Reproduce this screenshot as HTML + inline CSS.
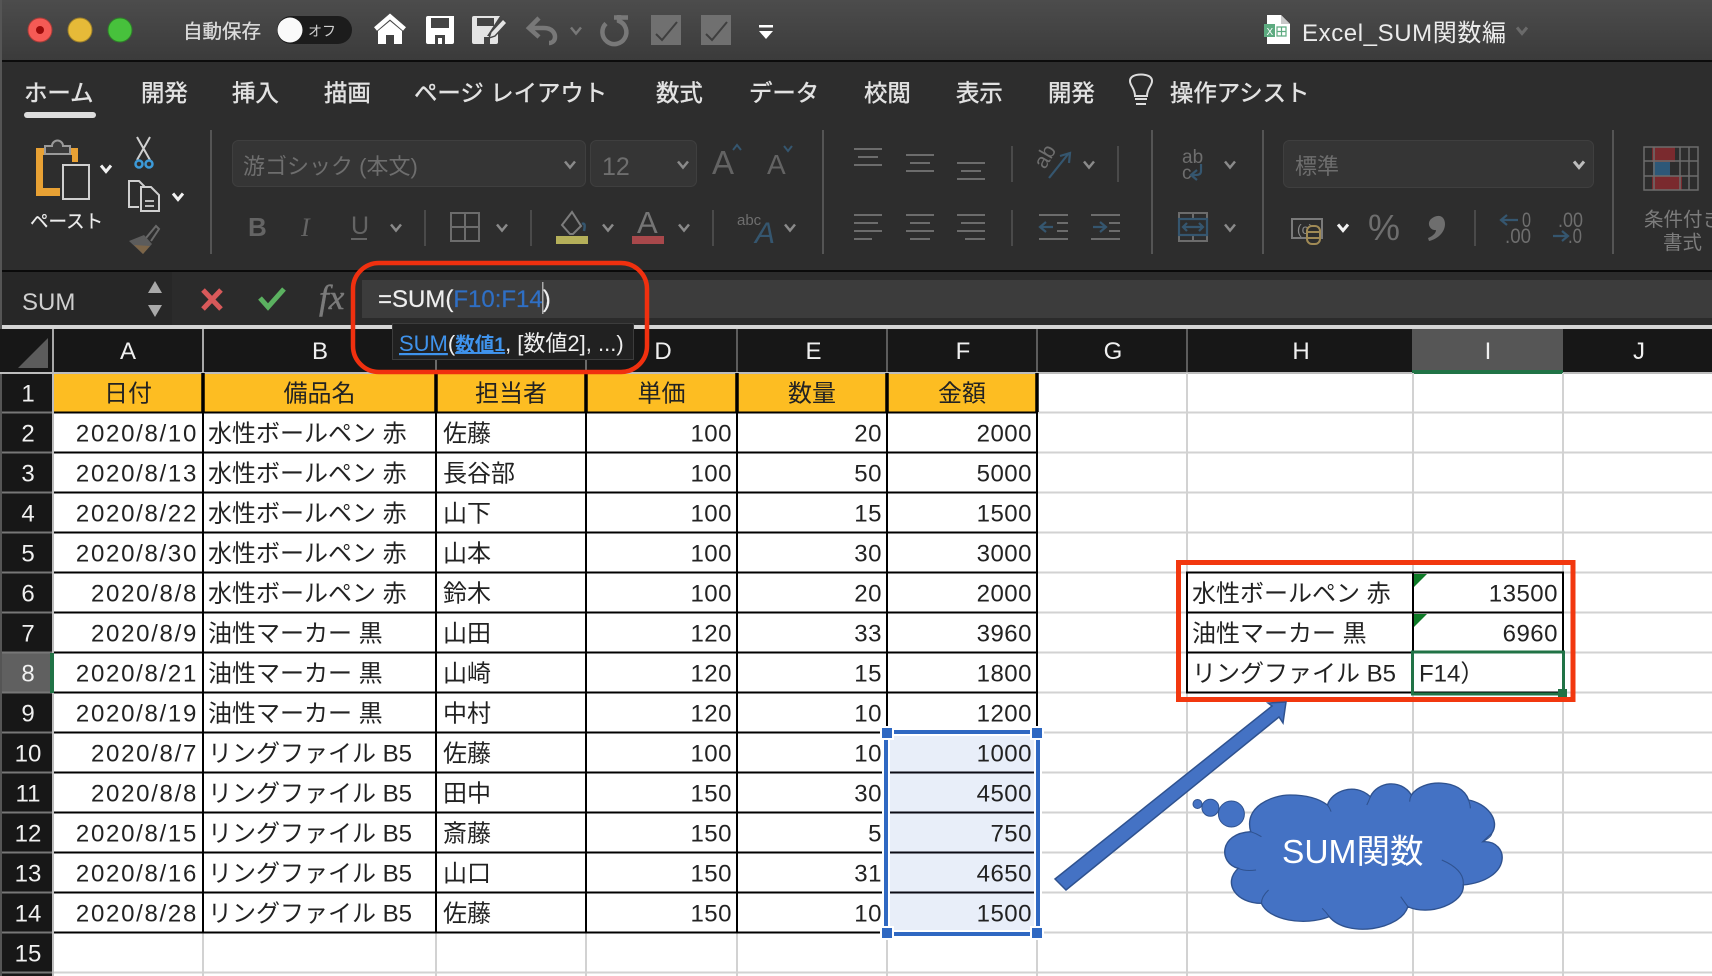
<!DOCTYPE html>
<html lang="ja"><head><meta charset="utf-8"><title>Excel_SUM関数編</title>
<style>
html,body{margin:0;padding:0;background:#fff;width:1712px;height:976px;overflow:hidden}
svg{display:block}
text{font-family:"Liberation Sans","Noto Sans CJK JP",sans-serif;font-size:24px}
.t{fill:#222}
.n{fill:#222;text-anchor:end;letter-spacing:.5px}
.d{fill:#222;text-anchor:end;letter-spacing:1.7px}
.h{fill:#222;text-anchor:middle}
.w{fill:#f0f0f0;text-anchor:middle}
.tab{fill:#e2e2e2;font-size:23.4px;stroke:#e2e2e2;stroke-width:.45px}
.g{fill:#6e6e6e}
.ln{stroke:#6c6c6c;stroke-width:2;fill:none}
.ib{stroke:#35566f;stroke-width:2.2;fill:none}
.sep{stroke:#545454;stroke-width:2}
.sm{stroke:#4a4a4a;stroke-width:2}
.cw{stroke:#f2f2f2;fill:none;stroke-width:3}
.cg{stroke:#8a8a8a;fill:none;stroke-width:2.5}
</style></head><body>
<svg width="1712" height="976" viewBox="0 0 1712 976" xmlns="http://www.w3.org/2000/svg">
<defs>
<linearGradient id="tb" x1="0" y1="0" x2="0" y2="1"><stop offset="0" stop-color="#4c4c4c"/><stop offset="1" stop-color="#3b3b3b"/></linearGradient>
<path id="c" d="M-5 -3.5L0 2.5L5 -3.5"/>
</defs>

<!-- title bar -->
<rect width="1712" height="60" fill="url(#tb)"/>
<rect y="60" width="1712" height="2" fill="#0c0c0c"/>
<rect y="62" width="1712" height="208" fill="#2d2d2d"/>
<rect y="270" width="1712" height="2" fill="#0a0a0a"/>
<rect y="0" width="2" height="330" fill="#555"/>
<circle cx="40" cy="30" r="12" fill="#f55a55" stroke="#a63c38"/><circle cx="40" cy="30" r="4" fill="#9c0a0a"/>
<circle cx="80" cy="30" r="12" fill="#e6ba38" stroke="#9c7f2a"/>
<circle cx="120" cy="30" r="12" fill="#47c13c" stroke="#2e7f29"/>
<text x="183" y="38" style="font-size:19.5px;fill:#dcdcdc;stroke:#dcdcdc;stroke-width:.3px">自動保存</text>
<rect x="277" y="16" width="75" height="28" rx="14" fill="#1c1c1c"/>
<circle cx="290" cy="30" r="12.5" fill="#fafafa"/>
<text x="308" y="36" style="font-size:14px;fill:#cfcfcf">オフ</text>
<!-- home -->
<path d="M375.5 29L390 16.5L404.5 29" fill="none" stroke="#fff" stroke-width="4.5"/>
<path d="M378 31L390 21L402 31V44H394V35H386V44H378Z" fill="#fff"/>
<!-- save -->
<path d="M428 16H454V42Q454 44 452 44H428Q426 44 426 42V18Q426 16 428 16Z" fill="#fff"/>
<rect x="431" y="18" width="18" height="10" fill="#444"/><rect x="435" y="35" width="10" height="9" fill="#444"/><rect x="438" y="38" width="4" height="6" fill="#fff"/>
<!-- edit -->
<path d="M474 16H500L487 36L484 44H474Q472 44 472 42V18Q472 16 474 16Z" fill="#e4e4e4"/>
<rect x="477" y="18" width="17" height="8" fill="#444"/><path d="M481 44V36H490L498 32V42Q498 44 496 44Z" fill="#e4e4e4"/><rect x="484" y="37" width="6" height="7" fill="#444"/>
<path d="M491 32L503 19L507 23L495 36L489 38Z" fill="#e4e4e4" stroke="#444" stroke-width="1.4"/>
<!-- undo -->
<path d="M530 28H544C552 28 555 33 555 37C555 41 552 43 549 43M539 18L529 28L539 37" fill="none" stroke="#787878" stroke-width="4.5"/>
<use href="#c" x="576" y="31" fill="none" stroke="#787878" stroke-width="2.5"/>
<path d="M606 23.5A12 12 0 1 0 619 21V15M614 17.500H628" fill="none" stroke="#787878" stroke-width="4.5"/>
<rect x="651" y="15" width="30" height="30" fill="#707070"/><path d="M656 34L662 40L677 22" fill="none" stroke="#3f3f3f" stroke-width="2"/>
<rect x="701" y="15" width="30" height="30" fill="#707070"/><path d="M706 34L712 40L727 22" fill="none" stroke="#3f3f3f" stroke-width="2"/>
<rect x="759" y="25" width="14" height="2.5" fill="#fff"/><path d="M759 31H773L766 39Z" fill="#fff"/>
<!-- doc title -->
<path d="M1267 15H1281L1290 24V44H1267Z" fill="#fff"/><path d="M1281 15L1290 24H1281Z" fill="#c9c9c9"/>
<rect x="1264" y="24" width="11" height="13" fill="#5dab80"/>
<text x="1266.5" y="35" style="font-size:10px;fill:#fff">X</text>
<path d="M1277 27h9v9h-9zM1277 31.5h9M1281.500 27v9" fill="none" stroke="#5dab80" stroke-width="1.2"/>
<text x="1302" y="41" style="fill:#ebebeb;letter-spacing:.6px">Excel_SUM関数編</text>
<use href="#c" x="1522" y="31" fill="none" stroke="#6a6a6a" stroke-width="3"/>

<!-- tabs -->
<text class="tab" x="24" y="101">ホーム</text>
<rect x="24" y="112" width="72" height="6" rx="3" fill="#ddd"/>
<text class="tab" x="141" y="101">開発</text>
<text class="tab" x="232" y="101">挿入</text>
<text class="tab" x="324" y="101">描画</text>
<text class="tab" x="414" y="101">ページ レイアウト</text>
<text class="tab" x="656" y="101">数式</text>
<text class="tab" x="749" y="101">データ</text>
<text class="tab" x="864" y="101">校閲</text>
<text class="tab" x="956" y="101">表示</text>
<text class="tab" x="1048" y="101">開発</text>
<text class="tab" x="1170" y="101">操作アシスト</text>
<path d="M1135 96C1135 88 1130 86 1130 81C1130 77 1134 74.500 1141 74.500C1148 74.500 1152 77 1152 81C1152 86 1147 88 1147 96Z" fill="none" stroke="#ddd" stroke-width="2"/>
<path d="M1135 99H1147M1136 104H1146" stroke="#ddd" stroke-width="2"/>

<!-- clipboard group -->
<path d="M36 148H78V162H72V155H43V188H60V196H36Z" fill="#e8a134"/>
<path d="M45 153V146H52A5 5 0 0 1 63 146H70V154H45Z" fill="#3a3a3a" stroke="#9a9a9a" stroke-width="2"/>
<rect x="63" y="165" width="26" height="34" fill="#2d2d2d" stroke="#cfcfcf" stroke-width="2"/>
<use href="#c" x="106" y="169" class="cw"/>
<text x="30" y="228" style="font-size:18.500px;fill:#ececec;stroke:#ececec;stroke-width:.2px">ペースト</text>
<path d="M137 137L150 160M150 137L137 160" stroke="#d0d0d0" stroke-width="2" fill="none"/>
<circle cx="139" cy="164" r="3.500" fill="none" stroke="#3c9ad8" stroke-width="2.500"/><circle cx="149" cy="164" r="3.500" fill="none" stroke="#3c9ad8" stroke-width="2.500"/>
<path d="M139 207H129V181H139L144 186V190" fill="none" stroke="#cfcfcf" stroke-width="2"/>
<path d="M141 187H151L159 195V211H141Z" fill="#2d2d2d" stroke="#cfcfcf" stroke-width="2"/>
<path d="M145 201H154M145 206H154" stroke="#bbb" stroke-width="2"/>
<use href="#c" x="178" y="197" class="cw"/>
<path d="M146 238L156 226L159 229L151 241" fill="none" stroke="#6a6a6a" stroke-width="2"/>
<path d="M129 241L144 235L152 244L143 254Z" fill="#5c5c5c"/><path d="M134 245L150 246L143 254Z" fill="#7c6548"/>
<line class="sep" x1="211" y1="130" x2="211" y2="254"/>

<!-- font -->
<rect x="232.500" y="140.500" width="353" height="46" rx="6" fill="#353535" stroke="#3f3f3f"/>
<text x="243" y="174" class="g" style="font-size:22px">游ゴシック (本文)</text>
<use href="#c" x="570" y="165" class="cg"/>
<rect x="590.500" y="140.500" width="106" height="46" rx="6" fill="#353535" stroke="#3f3f3f"/>
<text x="602" y="175" class="g" style="font-size:25px">12</text>
<use href="#c" x="683" y="165" class="cg"/>
<text x="712" y="174" style="font-size:33px;fill:#636363">A</text><path d="M733 150L737 145L741 150" fill="none" stroke="#35566f" stroke-width="2"/>
<text x="767" y="174" style="font-size:28px;fill:#636363">A</text><path d="M784 146L788 151L792 146" fill="none" stroke="#35566f" stroke-width="2"/>
<text x="248" y="236" style="font-size:26px;font-weight:bold;fill:#646464">B</text>
<text x="301" y="236" style="font-size:26px;font-style:italic;font-family:'Liberation Serif',serif;fill:#646464">I</text>
<text x="351" y="234" style="font-size:25px;fill:#646464">U</text><path d="M351 239H367" stroke="#646464" stroke-width="2"/>
<use href="#c" x="396" y="228" class="cg"/>
<line class="sm" x1="425" y1="210" x2="425" y2="246"/>
<path d="M451 213H479V241H451ZM465 213V241M451 227H479" fill="none" stroke="#6c6c6c" stroke-width="2"/>
<use href="#c" x="502" y="228" class="cg"/>
<line class="sm" x1="531" y1="210" x2="531" y2="246"/>
<path d="M562 225L572 212L581 226L573 234H570Z" fill="none" stroke="#7c7c7c" stroke-width="2"/><path d="M582 224Q586 222 584 231" stroke="#35566f" stroke-width="2.500" fill="none"/>
<rect x="556" y="236" width="32" height="8" fill="#b5b05a"/>
<use href="#c" x="608" y="228" class="cg"/>
<text x="637" y="233" style="font-size:31px;fill:#757575">A</text>
<rect x="632" y="236" width="32" height="8" fill="#a8484b"/>
<use href="#c" x="684" y="228" class="cg"/>
<line class="sm" x1="713" y1="210" x2="713" y2="246"/>
<text x="737" y="225" class="g" style="font-size:15px">abc</text>
<text x="755" y="243" style="font-size:30px;font-style:italic;fill:#35566f">A</text>
<use href="#c" x="790" y="228" class="cg"/>
<line class="sep" x1="823" y1="130" x2="823" y2="254"/>

<!-- alignment -->
<path class="ln" d="M854 149H882M858 157H878M854 165H882"/>
<path class="ln" d="M906 155H934M910 163H930M906 171H934"/>
<path class="ln" d="M957 163H985M961 171H981M957 179H985"/>
<path class="ln" d="M854 215H882M854 223H878M854 231H882M854 239H872"/>
<path class="ln" d="M906 215H934M910 223H930M906 231H934M910 239H930"/>
<path class="ln" d="M957 215H985M961 223H985M957 231H985M965 239H985"/>
<line class="sm" x1="1012" y1="146" x2="1012" y2="182"/>
<text transform="translate(1045,170) rotate(-60)" class="g" style="font-size:21px">ab</text>
<path class="ib" d="M1049 178L1069 153M1060 156L1070 153L1069 163"/>
<use href="#c" x="1089" y="165" class="cg"/>
<line class="sm" x1="1118" y1="146" x2="1118" y2="182"/>
<line class="sm" x1="1012" y1="210" x2="1012" y2="246"/>
<path class="ln" d="M1039 215H1068M1057 223H1068M1057 231H1068M1039 239H1068M1091 215H1120M1109 223H1120M1109 231H1120M1091 239H1120"/>
<path class="ib" d="M1053 227H1041M1046 222L1040 227L1046 232M1093 227H1105M1100 222L1106 227L1100 232"/>
<line class="sep" x1="1152" y1="130" x2="1152" y2="254"/>
<text x="1182" y="163" class="g" style="font-size:19px">ab</text>
<text x="1182" y="179" class="g" style="font-size:19px">c</text>
<path class="ib" d="M1201 164V171C1201 174 1199 175 1196 175H1192M1197 170L1191 175L1197 180"/>
<use href="#c" x="1230" y="165" class="cg"/>
<path class="ln" d="M1179 213H1207V241H1179ZM1193 213V220M1193 234V241"/>
<rect x="1179" y="219" width="28" height="16" class="ib"/>
<path class="ib" d="M1183 227H1203M1187 223L1183 227L1187 231M1199 223L1203 227L1199 231"/>
<use href="#c" x="1230" y="228" class="cg"/>
<line class="sep" x1="1263" y1="130" x2="1263" y2="254"/>

<!-- number -->
<rect x="1283.500" y="140.500" width="310" height="47" rx="6" fill="#353535" stroke="#3f3f3f"/>
<text x="1295" y="174" class="g" style="font-size:22px">標準</text>
<use href="#c" x="1579" y="165" class="cw" style="stroke:#bdbdbd"/>
<rect x="1292" y="219" width="30" height="19" fill="none" stroke="#7a7a7a" stroke-width="2"/>
<text x="1297" y="234" style="font-size:14px;fill:#8a8a8a">(c)</text>
<rect x="1307" y="226" width="13" height="18" rx="5" fill="#2d2d2d" stroke="#a08a55" stroke-width="2"/><path d="M1307 232H1320M1307 238H1320" stroke="#a08a55" stroke-width="2"/>
<use href="#c" x="1343" y="228" class="cw"/>
<text x="1368" y="240" class="g" style="font-size:36px">%</text>
<path d="M1431 219C1438 213 1445 216 1445 224C1445 232 1438 239 1429 241L1428 238C1433 236 1436 233 1436 230C1431 231 1426 224 1431 219Z" fill="#6e6e6e"/>
<line class="sm" x1="1475" y1="210" x2="1475" y2="246"/>
<text x="1522" y="227" class="g" style="font-size:21px" textLength="9" lengthAdjust="spacingAndGlyphs">0</text>
<text x="1505" y="243" class="g" style="font-size:21px" textLength="26" lengthAdjust="spacingAndGlyphs">.00</text>
<path class="ib" d="M1518 220H1502M1507 215L1501 220L1507 225"/>
<text x="1558" y="227" class="g" style="font-size:21px" textLength="25" lengthAdjust="spacingAndGlyphs">.00</text>
<text x="1568" y="243" class="g" style="font-size:21px" textLength="14" lengthAdjust="spacingAndGlyphs">.0</text>
<path class="ib" d="M1553 236H1567M1562 231L1568 236L1562 241"/>
<line class="sep" x1="1613" y1="130" x2="1613" y2="254"/>
<rect x="1652" y="147" width="23" height="15" fill="#7a2a2e"/><rect x="1653" y="162" width="17" height="14" fill="#2d5878"/><rect x="1652" y="176" width="30" height="14" fill="#7a2a2e"/>
<path d="M1644 147H1698V190H1644ZM1644 161H1698M1644 176H1698M1654 147V190M1680 147V190M1689 147V190" fill="none" stroke="#6c6c6c" stroke-width="1.500"/>
<text x="1644" y="226" class="g" style="font-size:19.500px;fill:#7c7c7c">条件付き</text>
<text x="1663" y="249" class="g" style="font-size:19.500px;fill:#7c7c7c">書式</text>

<!-- formula bar -->
<rect y="272" width="1712" height="53" fill="#2b2b2b"/>
<rect x="0" y="272" width="172" height="53" fill="#272727"/>
<rect x="362" y="280" width="1350" height="38" fill="#3c3c3c"/>
<rect y="325" width="1712" height="4" fill="#d5d5d5"/>
<rect y="0" width="2" height="330" fill="#555"/>
<text x="22" y="310" style="fill:#cfcfcf">SUM</text>
<path d="M148 293L155 281L162 293Z" fill="#a9a9a9"/><path d="M148 305L155 317L162 305Z" fill="#a9a9a9"/>
<path d="M203 290L221 309M221 290L203 309" stroke="#d8595a" stroke-width="5"/>
<path d="M260 298L268 307L284 289" fill="none" stroke="#5bb160" stroke-width="5"/>
<text x="319" y="309" style="font-family:'Liberation Serif',serif;font-style:italic;font-size:35px;fill:#7a7a7a;stroke:#7a7a7a;stroke-width:.5px">fx</text>
<text x="378" y="307" style="fill:#eee;stroke:#eee;stroke-width:.2px">=SUM(<tspan fill="#2f6fc4" stroke="#2f6fc4">F10:F14</tspan>)</text>
<rect x="542" y="282" width="1.500" height="32" fill="#aaa"/>

<!-- column headers -->
<rect y="329" width="1712" height="43" fill="#171717"/>
<rect x="1412" y="329" width="151" height="41" fill="#565656"/>
<path d="M18 368L48 338V368Z" fill="#5c5c5c"/>
<path d="M53 329V372M203 329V372" stroke="#a8a8a8" stroke-width="2"/>
<path d="M436 329V372M586 329V372M737 329V372M887 329V372M1037 329V372M1187 329V372" stroke="#5c5c5c" stroke-width="2"/>
<text class="w" x="128" y="359">A</text><text class="w" x="320" y="359">B</text><text class="w" x="512" y="359">C</text><text class="w" x="663" y="359">D</text><text class="w" x="813.500" y="359">E</text><text class="w" x="963" y="359">F</text><text class="w" x="1113" y="359">G</text><text class="w" x="1301" y="359">H</text><text class="w" x="1488" y="359">I</text><text class="w" x="1639" y="359">J</text>

<!-- row headers -->
<rect y="373" width="53" height="603" fill="#171717"/>
<rect x="0" y="373" width="2" height="603" fill="#555"/>
<rect x="2" y="653" width="48" height="40" fill="#606060"/>
<g stroke="#777" stroke-width="2"><path d="M2 412.500H53M2 452.500H53M2 492.500H53M2 532.500H53M2 572.500H53M2 612.500H53M2 652.500H53M2 692.500H53M2 732.500H53M2 772.500H53M2 812.500H53M2 852.500H53M2 892.500H53M2 932.500H53M2 972.500H53"/></g>
<rect x="52" y="373" width="2" height="603" fill="#bdbdbd"/>
<rect x="50" y="653" width="4" height="40" fill="#217346"/>
<text class="w" x="28" y="401.500">1</text><text class="w" x="28" y="441.500">2</text><text class="w" x="28" y="481.500">3</text><text class="w" x="28" y="521.500">4</text><text class="w" x="28" y="561.500">5</text><text class="w" x="28" y="601.500">6</text><text class="w" x="28" y="641.500">7</text><text class="w" x="28" y="681.500">8</text><text class="w" x="28" y="721.500">9</text><text class="w" x="28" y="761.500">10</text><text class="w" x="28" y="801.500">11</text><text class="w" x="28" y="841.500">12</text><text class="w" x="28" y="881.500">13</text><text class="w" x="28" y="921.500">14</text><text class="w" x="28" y="961.500">15</text>

<!-- sheet -->
<rect x="54" y="373" width="1658" height="603" fill="#fff"/>
<rect y="372" width="1712" height="2" fill="#bdbdbd"/>
<rect x="1412" y="370" width="151" height="4" fill="#217346"/>
<!-- gridlines -->
<path stroke="#d2d2d2" stroke-width="2" d="M1038 412.500H1712M1038 452.500H1712M1038 492.500H1712M1038 532.500H1712M1038 572.500H1712M1038 612.500H1712M1038 652.500H1712M1038 692.500H1712M1038 732.500H1712M1038 772.500H1712M1038 812.500H1712M1038 852.500H1712M1038 892.500H1712M1038 932.500H1712M54 972.500H1712M1187 373V976M1413 373V976M1563 373V976M203 933V976M436 933V976M586 933V976M737 933V976M887 933V976M1037 933V976"/>
<!-- header row -->
<rect x="54" y="374" width="983" height="38" fill="#fdbd22"/>
<path stroke="#000" stroke-width="3.500" d="M203 373V412M436 373V412M586 373V412M737 373V412M887 373V412M1037 373V412"/>
<!-- borders -->
<path stroke="#000" stroke-width="2" d="M54 412.500H1038M54 452.500H1038M54 492.500H1038M54 532.500H1038M54 572.500H1038M54 612.500H1038M54 652.500H1038M54 692.500H1038M54 732.500H880M54 772.500H884M54 812.500H884M54 852.500H884M54 892.500H884M54 932.500H880M203 412V933M436 412V933M586 412V933M737 412V933M887 412V726M1037 412V726"/>
<!-- selection -->
<rect x="882" y="728" width="160" height="210" fill="#fff"/>
<rect x="890" y="736" width="144" height="194" fill="#e8eef9"/>
<path stroke="#0a0a14" stroke-width="2" d="M890 772.500H1034M890 812.500H1034M890 852.500H1034M890 892.500H1034"/>
<rect x="886" y="732" width="152" height="202" fill="none" stroke="#2f68c2" stroke-width="4"/>
<g fill="#2f68c2" stroke="#fff" stroke-width="2"><rect x="881" y="727" width="12" height="12"/><rect x="1031" y="727" width="12" height="12"/><rect x="881" y="927" width="12" height="12"/><rect x="1031" y="927" width="12" height="12"/></g>

<!-- headers text -->
<text class="h" x="128" y="401.500">日付</text><text class="h" x="319.500" y="401.500">備品名</text><text class="h" x="511" y="401.500">担当者</text><text class="h" x="661.500" y="401.500">単価</text><text class="h" x="812" y="401.500">数量</text><text class="h" x="962" y="401.500">金額</text>

<!-- data -->
<text class="d" x="198" y="441.500">2020/8/10</text><text class="t" x="208" y="441.500">水性ボールペン 赤</text><text class="t" x="443" y="441.500">佐藤</text><text class="n" x="732" y="441.500">100</text><text class="n" x="882" y="441.500">20</text><text class="n" x="1032" y="441.500">2000</text>
<text class="d" x="198" y="481.500">2020/8/13</text><text class="t" x="208" y="481.500">水性ボールペン 赤</text><text class="t" x="443" y="481.500">長谷部</text><text class="n" x="732" y="481.500">100</text><text class="n" x="882" y="481.500">50</text><text class="n" x="1032" y="481.500">5000</text>
<text class="d" x="198" y="521.500">2020/8/22</text><text class="t" x="208" y="521.500">水性ボールペン 赤</text><text class="t" x="443" y="521.500">山下</text><text class="n" x="732" y="521.500">100</text><text class="n" x="882" y="521.500">15</text><text class="n" x="1032" y="521.500">1500</text>
<text class="d" x="198" y="561.500">2020/8/30</text><text class="t" x="208" y="561.500">水性ボールペン 赤</text><text class="t" x="443" y="561.500">山本</text><text class="n" x="732" y="561.500">100</text><text class="n" x="882" y="561.500">30</text><text class="n" x="1032" y="561.500">3000</text>
<text class="d" x="198" y="601.500">2020/8/8</text><text class="t" x="208" y="601.500">水性ボールペン 赤</text><text class="t" x="443" y="601.500">鈴木</text><text class="n" x="732" y="601.500">100</text><text class="n" x="882" y="601.500">20</text><text class="n" x="1032" y="601.500">2000</text>
<text class="d" x="198" y="641.500">2020/8/9</text><text class="t" x="208" y="641.500">油性マーカー 黒</text><text class="t" x="443" y="641.500">山田</text><text class="n" x="732" y="641.500">120</text><text class="n" x="882" y="641.500">33</text><text class="n" x="1032" y="641.500">3960</text>
<text class="d" x="198" y="681.500">2020/8/21</text><text class="t" x="208" y="681.500">油性マーカー 黒</text><text class="t" x="443" y="681.500">山崎</text><text class="n" x="732" y="681.500">120</text><text class="n" x="882" y="681.500">15</text><text class="n" x="1032" y="681.500">1800</text>
<text class="d" x="198" y="721.500">2020/8/19</text><text class="t" x="208" y="721.500">油性マーカー 黒</text><text class="t" x="443" y="721.500">中村</text><text class="n" x="732" y="721.500">120</text><text class="n" x="882" y="721.500">10</text><text class="n" x="1032" y="721.500">1200</text>
<text class="d" x="198" y="761.500">2020/8/7</text><text class="t" x="208" y="761.500">リングファイル B5</text><text class="t" x="443" y="761.500">佐藤</text><text class="n" x="732" y="761.500">100</text><text class="n" x="882" y="761.500">10</text><text class="n" x="1032" y="761.500">1000</text>
<text class="d" x="198" y="801.500">2020/8/8</text><text class="t" x="208" y="801.500">リングファイル B5</text><text class="t" x="443" y="801.500">田中</text><text class="n" x="732" y="801.500">150</text><text class="n" x="882" y="801.500">30</text><text class="n" x="1032" y="801.500">4500</text>
<text class="d" x="198" y="841.500">2020/8/15</text><text class="t" x="208" y="841.500">リングファイル B5</text><text class="t" x="443" y="841.500">斎藤</text><text class="n" x="732" y="841.500">150</text><text class="n" x="882" y="841.500">5</text><text class="n" x="1032" y="841.500">750</text>
<text class="d" x="198" y="881.500">2020/8/16</text><text class="t" x="208" y="881.500">リングファイル B5</text><text class="t" x="443" y="881.500">山口</text><text class="n" x="732" y="881.500">150</text><text class="n" x="882" y="881.500">31</text><text class="n" x="1032" y="881.500">4650</text>
<text class="d" x="198" y="921.500">2020/8/28</text><text class="t" x="208" y="921.500">リングファイル B5</text><text class="t" x="443" y="921.500">佐藤</text><text class="n" x="732" y="921.500">150</text><text class="n" x="882" y="921.500">10</text><text class="n" x="1032" y="921.500">1500</text>

<!-- summary table -->
<rect x="1187" y="573" width="376" height="120" fill="#fff"/>
<path stroke="#000" stroke-width="2" fill="none" d="M1187 572.500H1563V692.500H1187ZM1187 612.500H1563M1187 652.500H1563M1413 572.500V692.500"/>
<path d="M1414 574H1427L1414 587Z" fill="#0d7a26"/><path d="M1414 614H1427L1414 627Z" fill="#0d7a26"/>
<text class="t" x="1192" y="601.500">水性ボールペン 赤</text><text class="n" x="1558" y="601.500">13500</text>
<text class="t" x="1192" y="641.500">油性マーカー 黒</text><text class="n" x="1558" y="641.500">6960</text>
<text class="t" x="1192" y="681.500">リングファイル B5</text>
<text class="t" x="1419" y="681.500">F14）</text>
<rect x="1412.500" y="652" width="151" height="42" fill="none" stroke="#217346" stroke-width="3"/>
<rect x="1558" y="689" width="9" height="8" fill="#217346"/>
<rect x="1178.500" y="562.500" width="394.500" height="137" fill="none" stroke="#f2380f" stroke-width="5"/>

<!-- arrow -->
<path d="M1055 879L1272 706L1268 703L1286 702L1283 723L1279 717L1066 890Z" fill="#4472c4" stroke="#2f528f" stroke-width="1.500"/>

<!-- cloud -->
<g transform="translate(1040,540) scale(.35714,.33333)">
<path d="M590 875C570 800 650 765 700 765C745 765 780 775 805 795C815 755 880 725 925 770C945 725 1010 715 1040 765C1070 715 1180 715 1200 780C1250 790 1290 840 1265 880L1240 905C1315 900 1325 1020 1185 1035C1190 1090 1090 1130 1030 1100C1010 1170 860 1195 810 1130C740 1160 640 1140 620 1090C550 1090 510 1030 555 985C500 970 500 880 590 875Z" fill="#4472c4" stroke="#2f528f" stroke-width="4"/>
<path d="M590 875Q605 880 620 890M805 795Q812 805 815 815M925 770Q920 785 915 795M1040 765Q1035 775 1035 785M1200 780Q1205 795 1205 805M1240 905Q1265 890 1265 880M1185 1035Q1190 990 1125 960M1030 1100Q1020 1085 1010 1070M810 1130Q800 1115 790 1105M620 1090Q620 1070 640 1050M555 985Q575 995 605 990" fill="none" stroke="#2f528f" stroke-width="3"/>
</g>
<circle cx="1231.400" cy="814" r="13" fill="#4472c4" stroke="#2f528f"/>
<circle cx="1210.400" cy="807.700" r="8.500" fill="#4472c4" stroke="#2f528f"/>
<circle cx="1197.500" cy="804" r="4.500" fill="#4472c4" stroke="#2f528f"/>
<text x="1282" y="863" style="font-size:33.500px;fill:#fff">SUM関数</text>

<!-- tooltip -->
<rect x="392.500" y="323.500" width="241" height="36" fill="#212121" stroke="#3c3c3c"/>
<path d="M436 360V372M586 360V372" stroke="#6a6a6a" stroke-width="2"/>
<text x="399" y="351" style="font-size:22px;fill:#eee"><tspan fill="#3f93ec" text-decoration="underline">SUM</tspan>(<tspan fill="#3f93ec" font-weight="bold" font-size="19.500" text-decoration="underline">数値1</tspan>, [数値2], ...)</text>
<rect x="353" y="263" width="294" height="109" rx="26" fill="none" stroke="#f0300f" stroke-width="4.500"/>
</svg>
</body></html>
